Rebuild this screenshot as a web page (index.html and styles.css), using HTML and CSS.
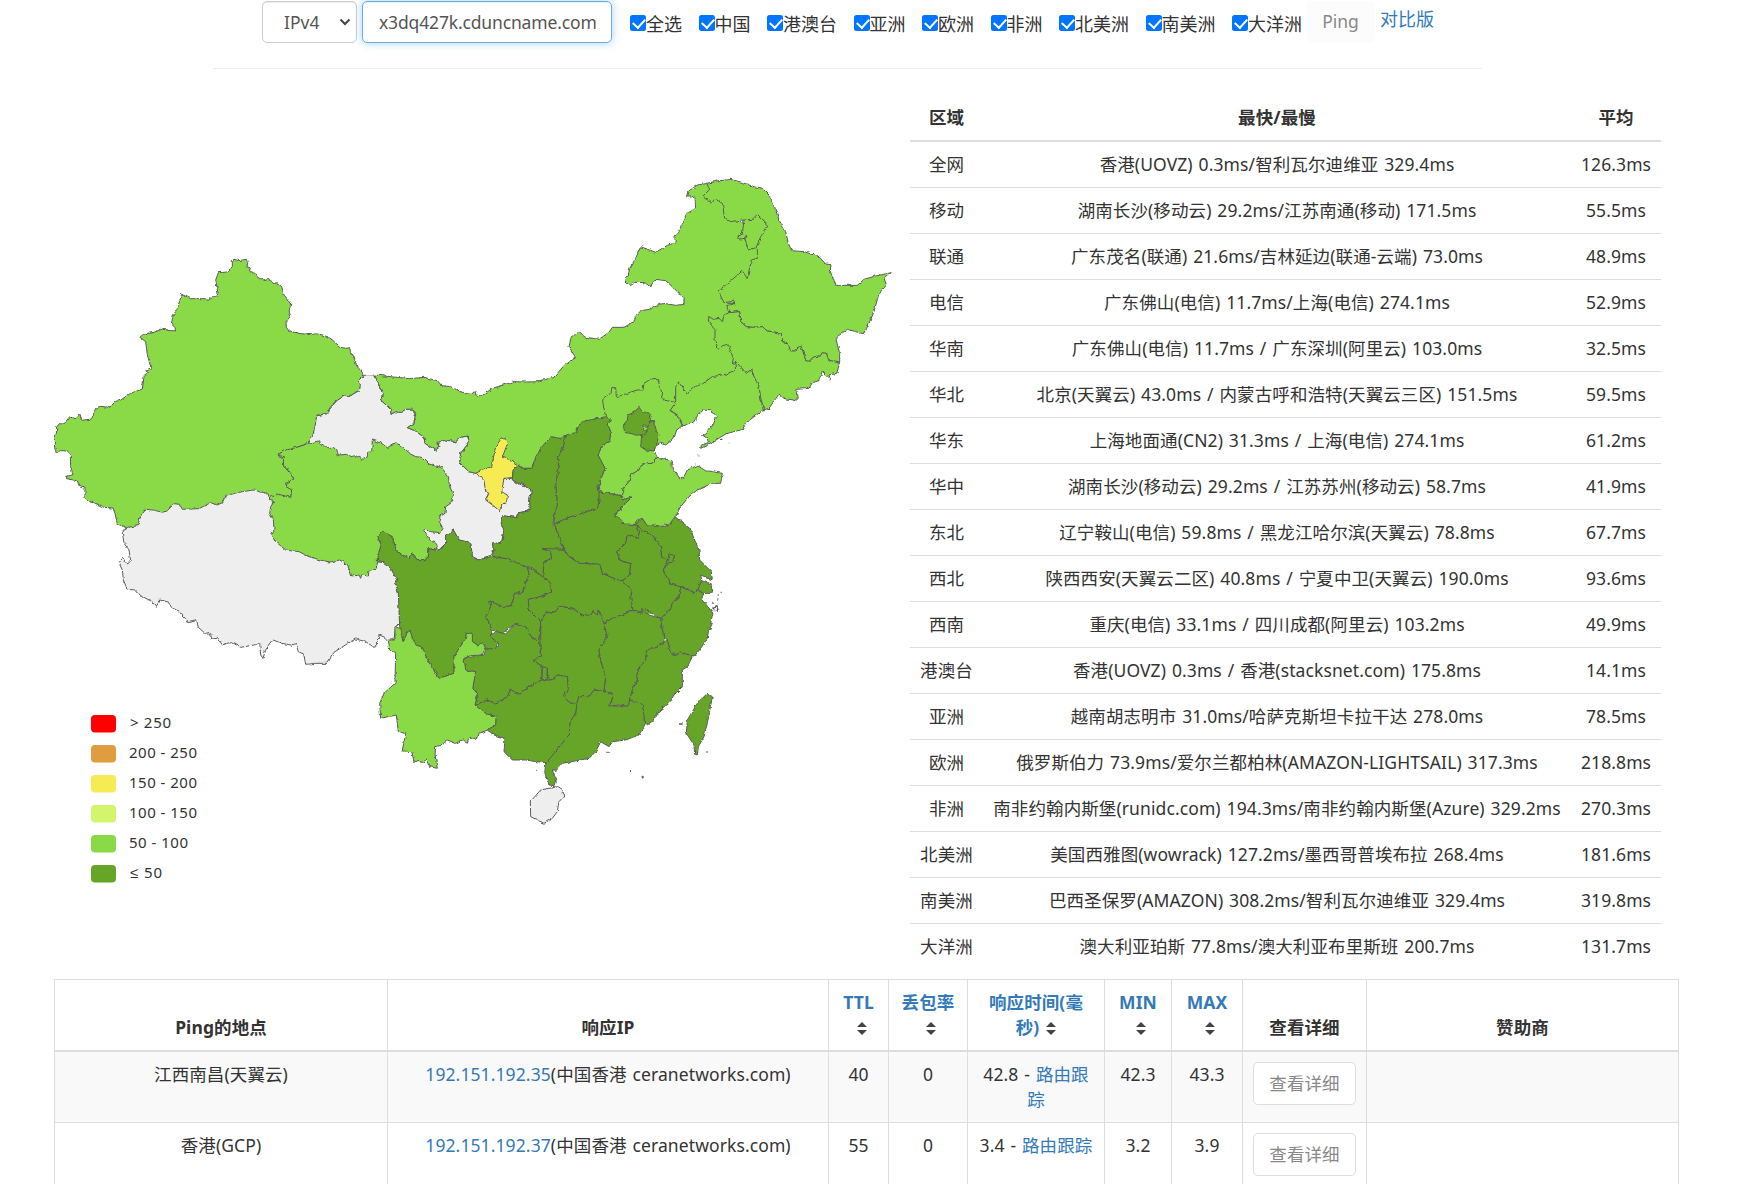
FILE: index.html
```html
<!DOCTYPE html>
<html lang="zh-CN">
<head>
<meta charset="utf-8">
<title>Ping</title>
<link rel="stylesheet" href="styles.css">
</head>
<body>
<form class="query">
  <div class="select">IPv4<svg width="12" height="8" viewBox="0 0 12 8"><path d="M1.5 1.5 6 6l4.500-4.500" fill="none" stroke="#444" stroke-width="2"/></svg></div>
  <div class="host"><span>x3dq427k.cduncname.com</span></div>
  <div class="areas">
    <label><i class="check"></i>全选</label><label><i class="check"></i>中国</label><label><i class="check"></i>港澳台</label><label><i class="check"></i>亚洲</label><label><i class="check"></i>欧洲</label><label><i class="check"></i>非洲</label><label><i class="check"></i>北美洲</label><label><i class="check"></i>南美洲</label><label><i class="check"></i>大洋洲</label>
  </div>
  <div class="ping">Ping</div>
  <a class="compare">对比版</a>
</form>
<hr class="rule">
<main class="overview">
<svg class="map" width="856" height="872" viewBox="54 98 856 872">
  <defs>
    <filter id="coast" x="0" y="0" width="1" height="1" color-interpolation-filters="sRGB">
      <feTurbulence type="fractalNoise" baseFrequency="0.22" numOctaves="2" seed="4" result="n"/>
      <feDisplacementMap in="SourceGraphic" in2="n" scale="3.500" xChannelSelector="R" yChannelSelector="G"/>
    </filter>
  </defs>
  <g class="land" filter="url(#coast)" transform="translate(-1 0)">
  <rect class="pad" x="40" y="90" width="870" height="880"/>
  <g transform="translate(100 480) scale(.33333)">
    <path class="none" d="M82 143 70 158 75 190 90 210 95 242 85 254 72 235 58 245 70 270 73 300 85 328 110 330 125 347 160 365 172 382 182 360 208 366 215 380 240 395 270 427 293 422 298 442 318 460 333 458 338 474 355 472 370 495 385 490 400 488 425 502 470 494 482 488 485 525 492 535 500 510 522 480 548 490 580 496 590 490 598 515 614 522 620 553 650 550 685 550 705 517 750 488 770 477 800 485 825 502 838 488 840 465 858 472 868 484 885 478 890 440 903 430 900 340 890 315 895 305 880 265 860 247 835 245 800 200 520 100 520 30 400 20 130 75Z"/>
  </g>
  <g transform="translate(260 360) scale(.33333)">
    <path class="none" d="M313 46 347 45 373 105 365 120 395 148 396 163 410 155 425 157 440 148 462 147 470 160 465 190 445 203 470 213 495 232 498 250 530 270 540 262 537 247 560 240 590 245 605 232 625 228 632 245 605 280 602 308 630 335 650 340 700 340 735 355 760 355 765 365 800 380 817 393 812 420 814 452 780 458 775 473 728 467 725 485 735 510 728 547 700 552 705 570 695 590 660 600 640 590 635 548 600 540 583 510 560 528 560 550 540 570 525 560 500 560 480 500 500 400 300 320 160 260 149 240 160 220 172 168 208 160 212 148 235 120 268 102 270 110 300 92 300 60Z"/>
    <path class="l100" d="M845 65 800 66 765 65 700 85 668 108 650 105 648 95 645 100 610 97 575 80 548 77 535 62 495 52 450 56 347 45 373 105 365 120 395 148 396 163 410 155 425 157 440 148 462 147 470 160 465 190 445 203 470 213 495 232 498 250 530 270 540 262 537 247 560 240 590 245 605 232 625 228 632 245 605 280 602 308 630 335 650 340 700 340 750 330 777 315 790 325 820 325 825 300 850 270 875 235 895 230 900 240 915 225 960 195"/>
  </g>
  <g transform="translate(40 240) scale(.33333)">
    <path class="l100" d="M580 62 585 58 600 62 622 58 626 70 624 80 634 84 631 92 650 102 656 112 675 122 692 118 705 132 715 128 728 140 735 165 748 180 755 192 750 215 755 228 741 245 742 262 750 273 780 280 815 284 830 281 855 286 880 300 905 322 920 325 933 323 934 338 942 345 955 380 972 400 974 410 961 418 964 435 961 452 945 458 928 470 920 462 905 474 885 488 870 507 867 520 833 526 828 560 820 590 809 602 809 610 780 620 735 635 717 642 722 652 734 650 734 680 750 692 767 715 745 732 743 742 755 745 757 772 740 770 714 763 712 771 695 769 680 760 645 750 610 755 560 766 550 788 535 795 515 788 480 806 430 808 422 793 405 791 385 812 370 817 350 811 318 808 305 828 296 857 262 863 235 852 228 820 222 804 195 802 165 788 145 783 138 770 138 742 118 735 115 722 80 716 80 710 102 704 95 680 94 645 82 633 65 632 52 637 46 618 50 606 40 594 52 585 53 560 62 551 75 552 92 530 108 537 122 523 128 541 158 537 170 505 183 499 212 502 230 484 245 480 275 460 310 447 316 405 328 398 320 392 336 383 325 345 320 305 303 292 312 283 345 277 375 265 385 271 410 273 408 262 397 252 402 228 415 205 428 163 455 176 500 176 507 181 520 173 533 170 537 160 530 120 538 98 565 96 580 80Z"/>
  </g>
  <g transform="translate(260 360) scale(.33333)">
    <path class="l100" d="M149 250 182 242 186 255 215 265 232 265 238 285 262 283 275 290 290 287 308 298 325 291 326 277 338 275 340 240 365 248 385 263 410 248 430 260 455 282 470 290 490 292 510 312 548 323 568 350 572 380 585 405 575 430 560 440 558 460 543 470 541 485 552 505 545 518 515 515 500 505 493 513 505 528 512 540 530 545 535 560 528 570 510 566 508 590 495 602 480 602 470 595 458 580 453 595 430 585 412 570 400 530 370 514 357 530 367 555 355 590 356 605 352 625 330 632 328 648 308 645 305 655 300 645 278 648 272 630 262 612 242 600 215 606 190 602 150 590 120 575 80 570 50 545 38 522 45 510 43 480 32 460 35 440 45 425 30 415 35 407 50 410 55 402 95 412 98 390 82 380 85 368 105 357 90 330 74 320 73 290 57 285 75 272 120 260Z"/>
    <path class="l200" d="M738 232 725 238 710 260 705 285 698 320 670 330 650 340 665 350 675 362 680 395 690 400 680 420 700 435 725 455 728 432 743 428 745 405 728 395 735 355 760 353 762 330 777 315 750 298 730 292 738 270 746 250 740 240Z"/>
  </g>
  <g transform="translate(540 160) scale(.33333)">
    <path class="l100" d="M0 663 45 652 75 617 110 593 90 560 97 530 120 518 140 532 180 538 210 517 220 502 255 502 285 485 290 468 305 453 335 447 345 438 375 430 410 436 435 433 435 415 410 390 400 380 380 362 350 358 333 380 318 368 290 367 273 377 257 362 260 352 268 345 272 325 290 295 305 260 350 277 385 256 410 248 412 240 405 232 418 215 430 190 445 160 470 145 468 115 458 108 443 108 447 95 475 75 503 70 530 90 620 200 680 290 650 450 600 500 600 600 590 640 445 722 410 745 360 740 220 755 150 820 60 860 0 890"/>
    <path class="l100" d="M503 70 535 63 575 58 605 66 645 80 670 85 690 105 705 135 720 180 740 215 748 250 758 272 795 275 840 290 860 312 876 314 874 335 883 355 890 376 955 376 975 358 1010 348 1057 338 1035 355 1043 375 1020 400 1005 455 990 490 975 522 925 508 890 533 902 580 902 610 870 600 862 580 850 578 845 587 822 592 810 605 800 602 785 553 770 573 755 573 745 548 728 545 727 520 700 515 685 513 670 500 640 502 622 500 605 485 602 455 570 458 562 437 587 432 585 420 575 425 555 428 540 398 548 385 610 333 625 355 637 300 655 295 655 262 627 270 617 235 597 238 597 230 610 222 615 180 575 185 557 175 550 130 530 118 518 128 490 110 512 88Z"/>
    <path class="line" d="M615 180 640 178 655 163 688 195 665 230 652 262M565 430h20M610 222 622 225 617 238"/>
    <path class="l100" d="M510 470 523 478 540 475 550 485 555 465 570 458 602 455 605 485 622 500 640 502 670 500 685 513 700 515 727 520 728 545 745 548 755 573 770 573 785 553 800 602 810 605 822 592 845 587 850 578 862 580 870 600 902 610 893 640 870 645 875 663 850 633 840 662 820 668 810 685 773 688 778 715 770 722 735 715 720 702 690 745 673 750 665 715 660 680 645 650 637 628 622 640 592 607 580 610 583 595 567 553 550 557 540 568 528 545 528 510 508 483Z"/>
    <path class="l100" d="M592 607 622 640 637 628 645 650 660 680 665 715 673 750 625 785 610 808 560 822 510 853 485 865 487 855 508 848 505 835 490 825 500 820 522 795 532 772 515 752 490 750 475 765 465 785 432 797 415 765 393 750 410 727 410 680 420 668 445 703 460 683 490 672 520 650 560 643 590 630 588 612Z"/>
    <path class="isle" d="M546 838h4M569 848h3M560 822h4M476 885h2"/>
  </g>
  <g transform="translate(480 380) scale(.33333)">
    <path class="l50 base" d="M120 500 250 450 380 380 560 450 640 560 640 620 540 700 200 720 160 560Z"/>
    <path class="l100" d="M380 110 370 60 395 40 400 22 410 23 412 50 430 45 450 38 475 30 492 30 495 10 515 -3 535 -5 545 25 553 60 590 67 573 92 595 105 610 137 593 150 585 175 560 195 545 190 527 200 527 218 535 232 520 250 490 252 480 270 455 285 450 305 432 325 432 348 360 335 357 320 378 265 357 225 370 195 392 183 395 155 385 130 395 120Z"/>
    <path class="l50" d="M480 82 490 95 517 100 513 122 510 125 525 125 527 145 540 165 535 185 525 213 500 210 485 200 488 165 470 165 455 160 437 158 433 135 445 120 447 105 465 97Z"/>
    <path class="l100" d="M492 138 505 138 503 152 490 152Z"/>
    <path class="line" d="M513 122 508 140M505 150 500 162 487 165"/>
    <path class="l50" d="M380 110 395 120 385 130 395 155 392 183 370 195 357 225 378 265 357 320 362 340 360 365 355 385 325 395 270 412 225 432 228 395 235 375 230 310 240 260 235 235 250 210 262 165 290 158 300 135 320 122 345 118Z"/>
    <path class="l50" d="M262 165 245 175 215 170 185 205 165 245 160 265 130 265 115 255 102 275 100 300 140 318 157 333 152 360 154 392 120 398 115 413 68 407 65 425 75 450 68 487 40 492 45 510 38 530 90 537 115 550 145 562 150 560 192 590 195 545 218 535 215 515 190 508 255 508 240 465 222 432 228 395 235 375 230 310 240 260 235 235 250 210Z"/>
    <path class="l50" d="M360 335 430 348 430 360 460 350 455 360 440 370 410 400 412 408 440 432 470 435 482 455 475 475 445 465 440 490 413 515 425 543 455 550 452 585 430 603 410 598 370 580 362 553 300 550 265 525 250 495 225 432 270 412 325 395 355 385 360 365Z"/>
    <path class="l50" d="M470 433 490 450 520 465 545 500 548 530 565 540 553 573 575 612 605 620 600 650 580 670 575 690 548 715 525 705 500 685 485 700 462 695 455 650 460 630 430 603 452 585 455 550 425 543 413 515 440 490 445 465 475 475 482 455Z"/>
    <path class="l50" d="M588 410 632 445 645 475 660 510 662 540 697 575 700 600 665 585 668 598 665 625 645 638 625 625 605 620 575 612 553 573 565 550 585 545 587 527 570 522 565 540 548 530 545 500 520 465 490 450 470 433 490 415 505 437 515 433 550 440 570 435Z"/>
    <path class="l50" d="M668 602 695 612 702 635 675 642 657 628Z"/>
    <path class="l100" d="M535 232 578 242 580 265 603 295 615 290 625 270 655 257 680 272 730 280 725 310 700 310 655 330 630 350 605 380 588 410 570 435 555 432 550 440 515 433 505 437 490 415 475 420 465 433 435 432 410 405 440 370 460 350 430 360 432 325 450 305 455 285 480 270 490 252 520 250Z"/>
    <path class="isle" d="M725 637h3M716 645h3M715 660h3M700 670h4M702 685l12 -5 3 10 -12 2zM650 252h4"/>
  </g>
  <g transform="translate(360 560) scale(.33333)">
    <path class="l50 base" d="M420 230 600 170 800 170 900 190 860 260 800 400 640 500 450 420Z"/>
    <path class="l50" d="M55 5 55 -10 67 -45 57 -70 70 -86 100 -70 112 -30 130 -15 153 -5 158 -20 170 -5 180 2 195 2 208 -10 210 -34 228 -30 240 -30 260 -50 260 -72 283 -90 300 -60 335 -52 340 -10 360 0 395 -10 450 -3 475 10 505 22 510 40 490 98 470 100 455 138 430 140 393 123 395 140 380 170 400 210 395 230 415 250 410 265 380 268 378 255 355 255 340 245 340 220 322 220 320 235 285 290 285 340 240 355 220 325 185 260 170 255 150 210 132 245 122 200 118 100 108 70 115 62 95 25 75 8Z"/>
    <path class="l50" d="M505 20 552 50 575 70 578 95 545 110 508 118 510 150 545 185 540 240 520 235 500 200 470 190 430 220 400 210 380 170 395 140 393 123 430 140 455 138 470 100 490 98 510 40Z"/>
    <path class="l50" d="M550 -35 615 -32 630 -10 660 10 722 13 730 40 770 58 790 63 820 90 815 110 822 152 760 175 735 190 718 150 715 165 702 155 692 170 670 165 640 145 600 138 590 155 560 160 545 185 510 150 508 118 545 110 578 95 575 70 552 50 555 5 578 -5 575 -25Z"/>
    <path class="l50" d="M545 185 560 160 590 155 600 138 640 145 670 165 692 170 702 155 715 165 718 150 735 190 745 230 720 270 725 300 740 350 735 395 705 390 690 410 660 415 660 425 635 430 612 410 628 390 625 350 595 345 580 360 565 350 565 325 550 320 523 300 548 290 545 230Z"/>
    <path class="l50" d="M735 190 760 175 822 152 850 160 848 145 870 165 905 175 915 235 915 250 862 272 860 300 835 330 835 360 820 390 812 420 808 440 780 435 750 440 765 405 735 395 740 350 725 300 720 270 745 230Z"/>
    <path class="l50" d="M965 80 985 90 1005 98 1015 90 1035 102 1025 115 1055 150 1062 160 1055 190 1060 190 1048 215 1045 235 1025 265 1005 290 998 288 965 275 955 285 935 280 925 238 915 235 905 180 908 172 935 148 940 128 960 112Z"/>
    <path class="l50" d="M925 238 935 280 955 285 965 275 1000 290 985 320 970 330 970 380 945 405 930 430 900 455 885 480 865 495 855 470 850 440 812 420 820 390 835 360 835 330 860 300 862 272 915 250Z"/>
    <path class="l50" d="M380 268 410 265 420 255 393 225 415 215 440 222 470 190 500 200 520 235 540 240 548 290 523 300 550 320 548 360 510 380 480 405 455 388 445 410 410 432 385 420 348 435 355 405 342 380 350 335 320 330 312 295 375 285Z"/>
    <path class="l100" d="M108 200 122 205 132 245 150 210 170 255 185 260 220 325 240 355 285 340 285 290 320 235 322 220 340 220 340 245 355 255 372 248 378 262 370 285 335 287 315 295 320 330 350 335 342 380 355 405 348 435 380 460 412 470 410 495 385 510 360 520 355 535 330 535 325 550 310 540 290 550 265 540 250 555 230 560 228 585 235 625 212 620 205 597 190 607 165 603 158 575 130 573 140 520 118 515 112 465 65 475 62 430 75 400 108 370 110 275 92 270 88 240 108 240Z"/>
    <path class="l50" d="M348 435 385 420 410 432 445 410 455 388 480 405 510 380 548 360 580 360 595 345 625 350 628 390 612 410 635 430 655 428 650 460 630 490 628 530 605 555 590 575 565 608 530 605 500 600 460 600 435 575 438 535 405 525 385 510 410 495 412 470 380 460Z"/>
    <path class="l50" d="M655 428 660 410 690 410 705 390 735 395 765 405 748 438 808 438 812 420 850 430 855 470 860 490 840 525 800 540 760 545 750 560 725 545 710 575 690 595 610 610 590 630 580 630 592 665 588 677 570 675 557 640 560 610 590 575 605 555 628 530 630 490 650 460Z"/>
    <path class="line" d="M550 320 548 360 565 358 565 325"/>
    <path class="none" d="M598 680 612 690 614 710 600 725 595 755 580 775 555 790 515 770 514 725 545 690Z"/>
    <path class="l50" d="M1045 400 1060 410 1045 490 1035 530 1018 560 1015 585 1007 583 1005 555 982 520 985 480 1015 430Z"/>
    <path class="isle" d="M960 492h8M1042 576h4M815 630v6M848 648l5 3 -4 4M745 577h4M680 598h6M585 635l8 -3M532 631h3M908 442h8M945 400h6M965 385h7"/>
  </g>
  </g>
  <g class="legend">
    <rect x="91" y="715" width="25" height="17.500" rx="4" fill="#f00"/><text x="130" y="728" textLength="41">&gt; 250</text>
    <rect x="91" y="745" width="25" height="17.500" rx="4" fill="#e09d3f"/><text x="129" y="758" textLength="68">200 - 250</text>
    <rect x="91" y="775" width="25" height="17.500" rx="4" fill="#f6eb53"/><text x="129" y="788" textLength="68">150 - 200</text>
    <rect x="91" y="805" width="25" height="17.500" rx="4" fill="#d2f56b"/><text x="129" y="818" textLength="68">100 - 150</text>
    <rect x="91" y="835" width="25" height="17.500" rx="4" fill="#8ada48"/><text x="129" y="848" textLength="59">50 - 100</text>
    <rect x="91" y="865" width="25" height="17.500" rx="4" fill="#66a528"/><text x="130" y="878" textLength="32">≤ 50</text>
  </g>
</svg>
<table class="regions">
  <colgroup><col class="r1"><col><col class="r3"></colgroup>
  <tr><th>区域</th><th>最快/最慢</th><th>平均</th></tr>
  <tr><td>全网</td><td>香港(UOVZ) 0.3ms/智利瓦尔迪维亚 329.4ms</td><td>126.3ms</td></tr>
  <tr><td>移动</td><td>湖南长沙(移动云) 29.2ms/江苏南通(移动) 171.5ms</td><td>55.5ms</td></tr>
  <tr><td>联通</td><td>广东茂名(联通) 21.6ms/吉林延边(联通-云端) 73.0ms</td><td>48.9ms</td></tr>
  <tr><td>电信</td><td>广东佛山(电信) 11.7ms/上海(电信) 274.1ms</td><td>52.9ms</td></tr>
  <tr><td>华南</td><td>广东佛山(电信) 11.7ms / 广东深圳(阿里云) 103.0ms</td><td>32.5ms</td></tr>
  <tr><td>华北</td><td>北京(天翼云) 43.0ms / 内蒙古呼和浩特(天翼云三区) 151.5ms</td><td>59.5ms</td></tr>
  <tr><td>华东</td><td>上海地面通(CN2) 31.3ms / 上海(电信) 274.1ms</td><td>61.2ms</td></tr>
  <tr><td>华中</td><td>湖南长沙(移动云) 29.2ms / 江苏苏州(移动云) 58.7ms</td><td>41.9ms</td></tr>
  <tr><td>东北</td><td>辽宁鞍山(电信) 59.8ms / 黑龙江哈尔滨(天翼云) 78.8ms</td><td>67.7ms</td></tr>
  <tr><td>西北</td><td>陕西西安(天翼云二区) 40.8ms / 宁夏中卫(天翼云) 190.0ms</td><td>93.6ms</td></tr>
  <tr><td>西南</td><td>重庆(电信) 33.1ms / 四川成都(阿里云) 103.2ms</td><td>49.9ms</td></tr>
  <tr><td>港澳台</td><td>香港(UOVZ) 0.3ms / 香港(stacksnet.com) 175.8ms</td><td>14.1ms</td></tr>
  <tr><td>亚洲</td><td>越南胡志明市 31.0ms/哈萨克斯坦卡拉干达 278.0ms</td><td>78.5ms</td></tr>
  <tr><td>欧洲</td><td>俄罗斯伯力 73.9ms/爱尔兰都柏林(AMAZON-LIGHTSAIL) 317.3ms</td><td>218.8ms</td></tr>
  <tr><td>非洲</td><td>南非约翰内斯堡(runidc.com) 194.3ms/南非约翰内斯堡(Azure) 329.2ms</td><td>270.3ms</td></tr>
  <tr><td>北美洲</td><td>美国西雅图(wowrack) 127.2ms/墨西哥普埃布拉 268.4ms</td><td>181.6ms</td></tr>
  <tr><td>南美洲</td><td>巴西圣保罗(AMAZON) 308.2ms/智利瓦尔迪维亚 329.4ms</td><td>319.8ms</td></tr>
  <tr><td>大洋洲</td><td>澳大利亚珀斯 77.8ms/澳大利亚布里斯班 200.7ms</td><td>131.7ms</td></tr>
</table>
</main>
<table class="results">
  <colgroup><col class="c1"><col class="c2"><col class="c3"><col class="c4"><col class="c5"><col class="c6"><col class="c7"><col class="c8"><col></colgroup>
  <tr>
    <th>Ping的地点</th><th>响应IP</th>
    <th><a>TTL</a><br>&nbsp;<i class="sort"></i></th>
    <th><a>丢包率</a><br>&nbsp;<i class="sort"></i></th>
    <th><a>响应时间(毫<br>秒)</a>&nbsp;<i class="sort"></i></th>
    <th><a>MIN</a><br>&nbsp;<i class="sort"></i></th>
    <th><a>MAX</a><br>&nbsp;<i class="sort"></i></th>
    <th>查看详细</th><th>赞助商</th>
  </tr>
  <tr class="odd">
    <td>江西南昌(天翼云)</td><td><a>192.151.192.35</a>(中国香港 ceranetworks.com)</td><td>40</td><td>0</td><td>42.8 - <a>路由跟<br>踪</a></td><td>42.3</td><td>43.3</td><td><span class="detail">查看详细</span></td><td></td>
  </tr>
  <tr>
    <td>香港(GCP)</td><td><a>192.151.192.37</a>(中国香港 ceranetworks.com)</td><td>55</td><td>0</td><td>3.4 - <a>路由跟踪</a></td><td>3.2</td><td>3.9</td><td><span class="detail">查看详细</span></td><td></td>
  </tr>
</table>
</body>
</html>
```
FILE: styles.css
```css
* { box-sizing: border-box; }
html, body { height: 1184px; overflow: hidden; }
body {
  margin: 0;
  background: #fff;
  color: #333;
  font: 17.500px/25px "Noto Sans", "Noto Sans CJK SC", sans-serif;
}
a { color: #337ab7; }
.query { display: flex; align-items: flex-start; height: 68px; padding: 1px 0 0 262px; }
.select, .host { height: 42px; border: 1px solid #ccc; border-radius: 5px; line-height: 40px; color: #555; box-shadow: inset 0 1px 1px rgba(0,0,0,.075); }
.select { display: flex; align-items: center; justify-content: space-between; width: 95px; padding: 0 5px 0 21px; margin-right: 5px; }
.host { width: 250px; padding: 0 15px 0 16px; border-color: #66afe9; box-shadow: inset 0 1px 1px rgba(0,0,0,.075), 0 0 8px rgba(102,175,233,.6); }
.host span { display: block; overflow: hidden; white-space: nowrap; letter-spacing: -.15px; }
.areas { display: flex; gap: 16.500px; margin: 10px 0 0 18px; font-size: 18px; }
.areas label { display: flex; align-items: center; height: 26px; white-space: nowrap; }
.check { position: relative; width: 16px; height: 16px; margin-bottom: 3px; border-radius: 2.500px; background: #0075ff; }
.check::after { content: ""; position: absolute; left: 5px; top: 1.500px; width: 6px; height: 10px; border: solid #fff; border-width: 0 2px 2px 0; transform: rotate(42deg); }
.ping { width: 69px; height: 42px; margin-left: 4px; border-radius: 6px; background: #fcfcfc; color: #888; line-height: 41px; text-align: center; }
.compare { margin: 6px 0 0 5px; font-size: 18px; }
.rule { width: 1269px; height: 1px; margin: 0 0 0 213px; border: 0; background: #eee; }
.overview { display: flex; padding: 29px 0 0 54px; height: 910px; }
.map { flex: none; display: block; }
.land path { stroke: #5a5a5a; stroke-width: 3; stroke-linejoin: round; }
.pad { fill: none; }
.none { fill: #eee; }
.l50 { fill: #66a528; }
.l100 { fill: #8ada48; }
.l200 { fill: #f6eb53; }
.line, .isle { fill: none; }
.land .isle { stroke-width: 4; }
.land .base { stroke: none; }
.legend text { font: 15px "Noto Sans", sans-serif; fill: #333; }
table { border-collapse: separate; border-spacing: 0; table-layout: fixed; text-align: center; letter-spacing: .1px; word-spacing: 1.200px; }
.regions { flex: none; width: 751px; height: 872px; }
.r1 { width: 73px; }
.r3 { width: 90px; }
.regions td, .regions th { height: 46px; padding: 0; white-space: nowrap; border-bottom: 1px solid #ddd; }
.regions th { height: 44px; padding-bottom: 3px; border-bottom-width: 2px; }
.regions tr:last-child td { padding-bottom: 2px; border-bottom: 0; }
.results { width: 1625px; margin: 0 0 0 54px; border: solid #ddd; border-width: 1px 0 0 1px; }
.results th, .results td { height: 71px; padding: 10px 0 0; vertical-align: top; border: solid #ddd; border-width: 0 1px 1px 0; }
.results th { height: 72px; padding: 0 0 10px; border-bottom-width: 2px; vertical-align: bottom; }
.odd td { background: #f9f9f9; }
.c1 { width: 333px; }
.c2 { width: 441px; }
.c3 { width: 60px; }
.c4 { width: 79px; }
.c5 { width: 137px; }
.c6 { width: 67px; }
.c7 { width: 71px; }
.c8 { width: 124px; }
.sort { display: inline-block; overflow: hidden; width: 10px; height: 13px; vertical-align: -1px; margin-left: 1px; }
.sort::before, .sort::after { content: ""; display: block; border: solid transparent; border-width: 0 5px; }
.sort::before { border-bottom: 5px solid #444; margin-bottom: 3px; }
.sort::after { border-top: 5px solid #444; }
.detail { display: inline-block; width: 103px; height: 43px; border: 1px solid #ddd; border-radius: 5px; background: #fff; color: #888; line-height: 41px; }
```
